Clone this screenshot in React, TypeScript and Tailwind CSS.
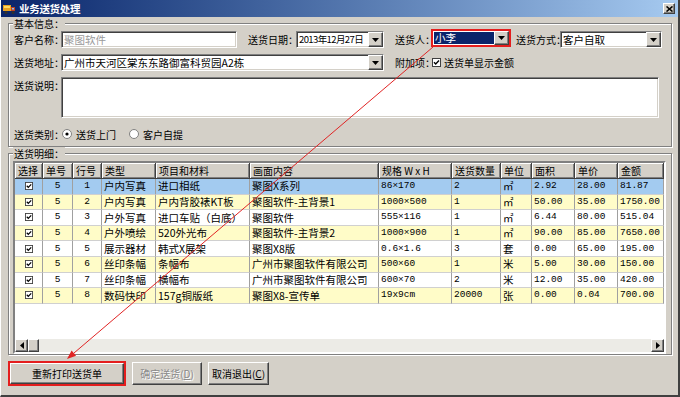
import React from 'react'

const sunken =
  'border border-t-[#808080] border-l-[#808080] border-b-white border-r-white shadow-[inset_1px_1px_0_#404040,inset_-1px_-1px_0_#d4d0c8]'
const raised =
  'border border-t-white border-l-white border-b-[#404040] border-r-[#404040] shadow-[inset_-1px_-1px_0_#808080]'
const etched = 'border border-[#808080] shadow-[inset_1px_1px_0_#fff,1px_1px_0_#fff]'

const cols = [28, 30, 29, 54, 94, 129, 73, 49, 31, 43, 43, 46]
const heads = ['选择', '单号', '行号', '类型', '项目和材料', '画面内容', '规格 W x H', '送货数量', '单位', '面积', '单价', '金额']

const rows = [
  ['5', '1', '户内写真', '进口相纸', '聚图X系列', '86×170', '2', '㎡', '2.92', '28.00', '81.87'],
  ['5', '2', '户内写真', '户内背胶裱KT板', '聚图软件-主背景1', '1000×500', '1', '㎡', '50.00', '35.00', '1750.00'],
  ['5', '3', '户外写真', '进口车贴（白底）', '聚图软件', '555×116', '1', '㎡', '6.44', '80.00', '515.04'],
  ['5', '4', '户外喷绘', '520外光布', '聚图软件-主背景2', '1000×900', '1', '㎡', '90.00', '85.00', '7650.00'],
  ['5', '5', '展示器材', '韩式X展架', '聚图X8版', '0.6×1.6', '3', '套', '0.00', '65.00', '195.00'],
  ['5', '6', '丝印条幅', '条幅布', '广州市聚图软件有限公司', '500×60', '1', '米', '5.00', '30.00', '150.00'],
  ['5', '7', '丝印条幅', '横幅布', '广州市聚图软件有限公司', '600×70', '2', '米', '12.00', '35.00', '420.00'],
  ['5', '8', '数码快印', '157g铜版纸', '聚图X8-宣传单', '19x9cm', '20000', '张', '0.00', '0.04', '700.00'],
]

function DownArrow() {
  return (
    <svg width="7" height="4" viewBox="0 0 7 4">
      <path d="M0 0H7L3.5 4Z" fill="#000" />
    </svg>
  )
}

function DropBtn() {
  return (
    <div className={`w-[15px] shrink-0 bg-[#d4d0c8] flex items-center justify-center ${raised}`}>
      <DownArrow />
    </div>
  )
}

function Combo({ className, textClass = 'text-[10.5px]', children }: { className: string; textClass?: string; children: React.ReactNode }) {
  return (
    <div className={`h-[17px] bg-white flex shrink-0 ${sunken} ${className}`}>
      <div className={`flex-1 flex items-center px-[2px] whitespace-nowrap overflow-hidden ${textClass}`}>{children}</div>
      <DropBtn />
    </div>
  )
}

function Check({ size = 9 }: { size?: number }) {
  return (
    <svg width={size} height={size} viewBox="0 0 9 9" className="shrink-0">
      <rect x="0.5" y="0.5" width="8" height="8" fill="#fff" stroke="#404040" />
      <path d="M2 4.2L3.7 6L7 2.6" stroke="#000" strokeWidth="1.4" fill="none" />
    </svg>
  )
}

function Radio({ on }: { on?: boolean }) {
  return (
    <svg width="10" height="10" viewBox="0 0 10 10" className="shrink-0">
      <circle cx="5" cy="5" r="4.5" fill="#fff" stroke="#808080" />
      {on && <circle cx="5" cy="5" r="1.6" fill="#000" />}
    </svg>
  )
}

function GroupLabel({ children }: { children: React.ReactNode }) {
  return (
    <span className="absolute -top-[7px] left-[4px] px-[1px] bg-[#d4d0c8] text-[10px] leading-[13px]">{children}</span>
  )
}

const isNum = (i: number) => i >= 5 && i !== 7

export default function App() {
  return (
    <div className="relative w-[680px] h-[397px] bg-[#d4d0c8] border-r-2 border-b-2 border-r-[#404040] border-b-[#404040] border-l border-l-white overflow-hidden font-['Noto_Sans_CJK_SC',sans-serif] text-black">
      {/* Title bar */}
      <div className="h-[17px] flex items-center bg-linear-to-r from-[#0a246a] to-[#a6caf0] pl-[2px] pr-[3px]">
        <svg width="13" height="12" viewBox="0 0 13 12" className="shrink-0">
          <rect x="0" y="2" width="8" height="6" fill="#e8a020" />
          <rect x="1" y="3" width="6" height="2" fill="#ffd860" />
          <rect x="8" y="4" width="4" height="4" fill="#c04020" />
          <rect x="9" y="5" width="2" height="1.5" fill="#80c0ff" />
          <circle cx="3" cy="9.5" r="1.6" fill="#303030" />
          <circle cx="10" cy="9.5" r="1.6" fill="#303030" />
        </svg>
        <span className="ml-[3px] text-white font-bold text-[10.5px] tracking-[-0.3px]">业务送货处理</span>
        <div className="flex-1" />
        <div className={`w-[12px] h-[11px] bg-[#d4d0c8] flex items-center justify-center ${raised}`}>
          <svg width="7" height="6" viewBox="0 0 7 6">
            <path d="M0.5 0.5L6.5 5.5M6.5 0.5L0.5 5.5" stroke="#000" strokeWidth="1.6" />
          </svg>
        </div>
      </div>

      <div className="px-[7px]">
        {/* 基本信息 */}
        <div className={`relative mt-[6px] w-[664px] h-[124px] pl-[5px] pt-[7px] text-[10px] ${etched}`}>
          <GroupLabel>基本信息：</GroupLabel>

          <div className="flex items-center h-[17px]">
            <span className="w-[47px] shrink-0 whitespace-nowrap">客户名称：</span>
            <div className={`w-[176px] h-[17px] shrink-0 bg-white flex items-center px-[2px] text-[10.5px] text-[#9a9a9a] ${sunken}`}>
              聚图软件
            </div>
            <span className="ml-[11px] w-[48px] shrink-0 whitespace-nowrap">送货日期：</span>
            <Combo className="w-[88px]" textClass="text-[9.5px] tracking-[-0.6px]">
              2013年12月27日
            </Combo>
            <span className="ml-[11px] w-[36px] shrink-0 whitespace-nowrap">送货人：</span>
            <div className="w-[80px] h-[18px] mb-[3px] shrink-0 border-2 border-[#e41e1e] flex bg-white">
              <div className="flex-1 m-[1px] mr-0 bg-[#0a246a] text-white text-[10.5px] flex items-center px-[1px]">小李</div>
              <DropBtn />
            </div>
            <span className="ml-[5px] w-[44px] shrink-0 whitespace-nowrap">送货方式：</span>
            <Combo className="w-[102px]">客户自取</Combo>
          </div>

          <div className="flex items-center h-[17px] mt-[6px]">
            <span className="w-[47px] shrink-0 whitespace-nowrap">送货地址：</span>
            <Combo className="w-[323px]">广州市天河区棠东东路御富科贸园A2栋</Combo>
            <span className="ml-[11px] w-[37px] shrink-0 whitespace-nowrap">附加项：</span>
            <Check />
            <span className="ml-[3px] whitespace-nowrap">送货单显示金额</span>
          </div>

          <div className="flex mt-[6px]">
            <span className="w-[47px] shrink-0 whitespace-nowrap pt-[1px]">送货说明：</span>
            <div className={`w-[598px] h-[41px] bg-white ${sunken}`} />
          </div>

          <div className="flex items-center h-[16px] mt-[8px]">
            <span className="w-[48px] shrink-0 whitespace-nowrap">送货类别：</span>
            <Radio on />
            <span className="ml-[4px] whitespace-nowrap">送货上门</span>
            <span className="ml-[13px]">
              <Radio />
            </span>
            <span className="ml-[4px] whitespace-nowrap">客户自提</span>
          </div>
        </div>

        {/* 送货明细 */}
        <div className={`relative mt-[6px] w-[664px] h-[202px] pl-[4px] pt-[7px] ${etched}`}>
          <GroupLabel>送货明细：</GroupLabel>
          <div className="w-[653px] h-[193px] bg-white flex flex-col border-2 border-t-[#808080] border-l-[#808080] border-b-white border-r-white">
            <div className="flex h-[16px] shrink-0">
              {heads.map((h, i) => (
                <div
                  key={h}
                  style={{ width: cols[i] }}
                  className="shrink-0 bg-[#d4d0c8] border-r border-b border-[#404040] shadow-[inset_1px_1px_0_#fff,inset_-1px_-1px_0_#808080] text-[10px] flex items-center pl-[3px] whitespace-nowrap overflow-hidden"
                >
                  {h}
                </div>
              ))}
            </div>
            {rows.map((r, ri) => {
              const bg = ri === 0 ? 'bg-[#a3cbf0]' : ri % 2 === 1 ? 'bg-[#fffcc8]' : 'bg-white'
              return (
                <div key={ri} className={`flex h-[15.6px] shrink-0 ${bg}`}>
                  <div
                    style={{ width: cols[0] }}
                    className="shrink-0 border-r border-b border-r-[#a0a0a0] border-b-[#d0d0d0] flex items-center justify-center"
                  >
                    <Check size={8} />
                  </div>
                  {r.map((c, ci) => (
                    <div
                      key={ci}
                      style={{ width: cols[ci + 1] }}
                      className={`shrink-0 border-r border-b border-r-[#a0a0a0] border-b-[#d0d0d0] flex items-center whitespace-nowrap overflow-hidden ${
                        ci < 2 ? 'justify-center font-[\'Liberation_Mono\',monospace] text-[9.5px]' : 'pl-[2px]'
                      } ${isNum(ci) ? "font-['Liberation_Mono',monospace] text-[9.5px]" : ci >= 2 ? 'text-[10.5px]' : ''}`}
                    >
                      {c}
                    </div>
                  ))}
                </div>
              )
            })}
            <div className="flex-1" />
            <div className="h-[13px] shrink-0 flex bg-[#ecebe6]">
              <div className={`w-[13px] bg-[#d4d0c8] flex items-center justify-center ${raised}`}>
                <svg width="4" height="7" viewBox="0 0 4 7">
                  <path d="M4 0V7L0 3.5Z" fill="#000" />
                </svg>
              </div>
              <div className={`w-[11px] bg-[#d4d0c8] ${raised}`} />
              <div className="flex-1" />
              <div className={`w-[13px] bg-[#d4d0c8] flex items-center justify-center ${raised}`}>
                <svg width="4" height="7" viewBox="0 0 4 7">
                  <path d="M0 0V7L4 3.5Z" fill="#000" />
                </svg>
              </div>
            </div>
          </div>
        </div>

        {/* Buttons */}
        <div className="flex items-center mt-[6px] text-[10px]">
          <div className="w-[118px] h-[25px] border-2 border-[#e41e1e] flex">
            <div className={`flex-1 bg-[#d4d0c8] flex items-center justify-center ${raised}`}>重新打印送货单</div>
          </div>
          <div
            className={`ml-[6px] w-[70px] h-[23px] bg-[#d4d0c8] flex items-center justify-center text-[#8a8a8a] [text-shadow:1px_1px_0_#fff] ${raised}`}
          >
            确定送货(<span className="underline">D</span>)
          </div>
          <div className={`ml-[6px] w-[61px] h-[23px] bg-[#d4d0c8] flex items-center justify-center ${raised}`}>
            取消退出(<span className="underline">C</span>)
          </div>
        </div>
      </div>

      {/* annotation arrow */}
      <svg className="absolute left-0 top-0 pointer-events-none" width="680" height="397" viewBox="0 0 680 397">
        <line x1="432" y1="47" x2="72.8" y2="353.2" stroke="#e02424" strokeWidth="1" />
        <polygon points="66,359 75.1,355.8 70.6,350.5" fill="#e02424" />
      </svg>
    </div>
  )
}
